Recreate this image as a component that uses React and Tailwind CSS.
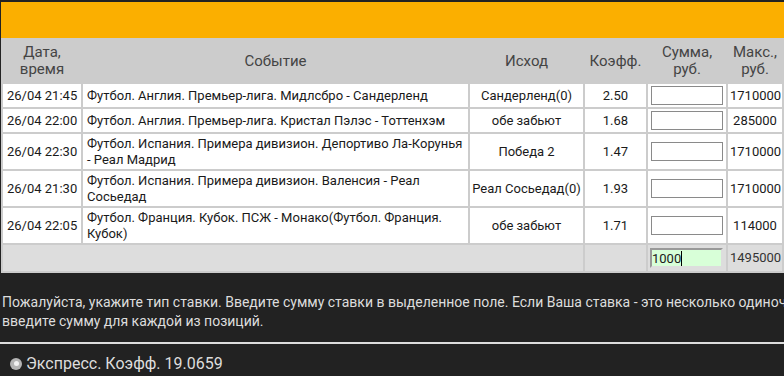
import React from 'react';

const rows = [
  { time: '26/04 21:45', event: 'Футбол. Англия. Премьер-лига. Мидлсбро - Сандерленд', outcome: 'Сандерленд(0)', coef: '2.50', max: '1710000' },
  { time: '26/04 22:00', event: 'Футбол. Англия. Премьер-лига. Кристал Пэлэс - Тоттенхэм', outcome: 'обе забьют', coef: '1.68', max: '285000' },
  { time: '26/04 22:30', event: 'Футбол. Испания. Примера дивизион. Депортиво Ла-Корунья - Реал Мадрид', outcome: 'Победа 2', coef: '1.47', max: '1710000' },
  { time: '26/04 21:30', event: 'Футбол. Испания. Примера дивизион. Валенсия - Реал Сосьедад', outcome: 'Реал Сосьедад(0)', coef: '1.93', max: '1710000' },
  { time: '26/04 22:05', event: 'Футбол. Франция. Кубок. ПСЖ - Монако(Футбол. Франция. Кубок)', outcome: 'обе забьют', coef: '1.71', max: '114000' },
];

const BetRow = ({ row }) => (
  <tr className="bg-white text-[13px] leading-[15.5px] text-[#1a1a1a]">
    <td className="px-[4px] py-[2px] whitespace-nowrap">{row.time}</td>
    <td className="px-[4px] py-[2px]">{row.event}</td>
    <td className="px-[2px] py-[2px] text-center whitespace-nowrap">{row.outcome}</td>
    <td className="px-[2px] py-[2px] text-center">{row.coef}</td>
    <td className="px-[3px] py-[2px]">
      <div className="w-[72px] h-[19px] border border-[#8a8a8a] bg-white" />
    </td>
    <td className="px-[2px] py-[2px] text-center">{row.max}</td>
  </tr>
);

const App = () => {
  return (
    <div className="w-[784px] h-[376px] overflow-hidden bg-[#222] pt-[2px] pl-[1px]" style={{ fontFamily: 'Roboto, "Liberation Sans", sans-serif' }}>
      <div className="h-[36px] bg-[#fbaf00]" />
      <table className="table-fixed border-separate border-spacing-[2px] bg-[#ccc] w-[783px]">
        <colgroup>
          <col className="w-[78px]" />
          <col className="w-[385px]" />
          <col className="w-[113px]" />
          <col className="w-[61px]" />
          <col className="w-[78px]" />
          <col className="w-[54px]" />
        </colgroup>
        <thead>
          <tr className="text-[15px] leading-[17px] text-[#444] font-normal h-[42px]">
            <th className="font-normal">Дата,<br />время</th>
            <th className="font-normal">Событие</th>
            <th className="font-normal">Исход</th>
            <th className="font-normal">Коэфф.</th>
            <th className="font-normal">Сумма,<br />руб.</th>
            <th className="font-normal">Макс.,<br />руб.</th>
          </tr>
        </thead>
        <tbody>
          {rows.map((row, i) => (
            <BetRow key={i} row={row} />
          ))}
          <tr className="bg-[#ddd] text-[13px] h-[26px]">
            <td colSpan={3} />
            <td />
            <td className="px-[2px] py-[3px]">
              <div className="w-[73px] h-[20px] bg-[#d8ffd8] border-2 border-t-[#999] border-l-[#999] border-b-[#ddd] border-r-[#ddd] flex items-center text-[#1a1a1a] leading-none">
                1000<span className="w-px h-[15px] bg-black" />
              </div>
            </td>
            <td className="px-[2px] text-center text-[#333]">1495000</td>
          </tr>
        </tbody>
      </table>
      <div className="pt-[20px] pl-[1px] text-[14px] leading-[19px] text-[#ddd] whitespace-nowrap">
        Пожалуйста, укажите тип ставки. Введите сумму ставки в выделенное поле. Если Ваша ставка - это несколько одиночных ставок,
        <br />
        введите сумму для каждой из позиций.
      </div>
      <div className="mt-[11px] -ml-[1px] h-[2px] bg-[#ddd]" />
      <div className="flex items-center gap-[4px] pl-[9px] pt-[10px] text-[16px] leading-[19px] text-[#ddd]">
        <span className="w-[12px] h-[12px] rounded-full bg-[#b5b5b5] flex items-center justify-center">
          <span className="w-[5px] h-[5px] rounded-full bg-[#f2f2f2]" />
        </span>
        Экспресс. Коэфф. 19.0659
      </div>
    </div>
  );
};

export default App;
